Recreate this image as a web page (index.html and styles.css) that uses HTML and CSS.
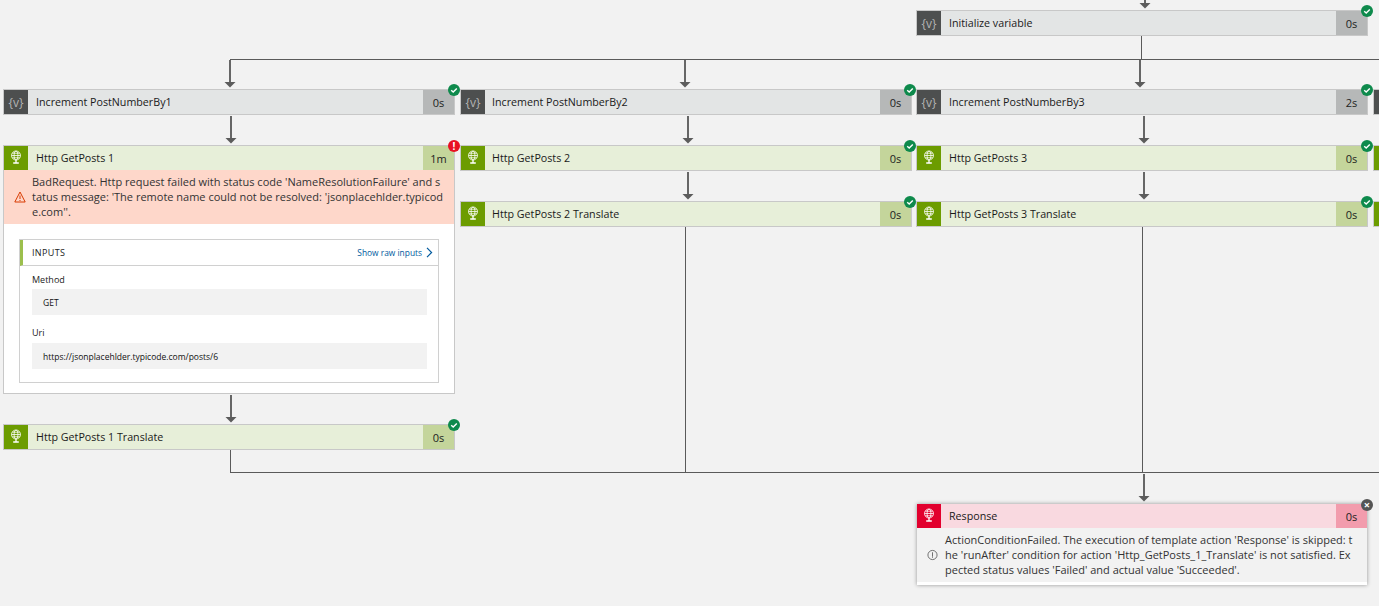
FILE: index.html
```html
<!DOCTYPE html>
<html lang="en">
<head>
  <meta charset="UTF-8">
  <title>Logic app run</title>
  <link rel="stylesheet" href="styles.css">
</head>
<body>
  <svg width="0" height="0" class="defs">
    <symbol id="globe" viewBox="0 0 24 24">
      <g fill="none" stroke="#fff" stroke-width="0.8">
        <circle cx="12" cy="9.5" r="4.5"/>
        <ellipse cx="12" cy="9.5" rx="2" ry="4.5"/>
        <path d="M7.5 9.5h9M8.2 7.2h7.6M8.2 11.8h7.6"/>
        <path d="M12 14v2.5M9.2 17h5.6" stroke-width="1.3"/>
      </g>
    </symbol>
    <symbol id="arrow" viewBox="0 0 12 28">
      <path d="M5 0h2v22H5z" fill="#666"/>
      <path d="M0.5 22h11L6 27.5z" fill="#5c5c5c"/>
    </symbol>
    <symbol id="ok" viewBox="0 0 12 12">
      <circle cx="6" cy="6" r="6" fill="#0e8a4c"/>
      <path d="M3.2 6.2l2 1.8 3.6-3.6" fill="none" stroke="#fff" stroke-width="1.4"/>
    </symbol>
  </svg>

  <div class="canvas">
    <!-- connectors -->
    <div class="line h top-bus"></div>
    <div class="line h bottom-bus"></div>
    <div class="line v from-init"></div>
    <div class="line v from-post1"></div>
    <div class="line v from-post2"></div>
    <div class="line v from-post3"></div>

    <svg class="arrow a-top"><use href="#arrow"/></svg>
    <svg class="arrow a-inc1"><use href="#arrow"/></svg>
    <svg class="arrow a-inc2"><use href="#arrow"/></svg>
    <svg class="arrow a-inc3"><use href="#arrow"/></svg>
    <svg class="arrow a-get1"><use href="#arrow"/></svg>
    <svg class="arrow a-get2"><use href="#arrow"/></svg>
    <svg class="arrow a-get3"><use href="#arrow"/></svg>
    <svg class="arrow a-tr2"><use href="#arrow"/></svg>
    <svg class="arrow a-tr3"><use href="#arrow"/></svg>
    <svg class="arrow a-tr1"><use href="#arrow"/></svg>
    <svg class="arrow a-resp"><use href="#arrow"/></svg>

    <!-- row: variables -->
    <div class="node var col3 row-init">
      <div class="head"><span class="ico">{v}</span><span class="name">Initialize variable</span><span class="time">0s</span></div>
      <svg class="badge"><use href="#ok"/></svg>
    </div>
    <div class="node var col1 row-inc">
      <div class="head"><span class="ico">{v}</span><span class="name">Increment PostNumberBy1</span><span class="time">0s</span></div>
      <svg class="badge"><use href="#ok"/></svg>
    </div>
    <div class="node var col2 row-inc">
      <div class="head"><span class="ico">{v}</span><span class="name">Increment PostNumberBy2</span><span class="time">0s</span></div>
      <svg class="badge"><use href="#ok"/></svg>
    </div>
    <div class="node var col3 row-inc">
      <div class="head"><span class="ico">{v}</span><span class="name">Increment PostNumberBy3</span><span class="time">2s</span></div>
      <svg class="badge"><use href="#ok"/></svg>
    </div>
    <div class="node var col4 row-inc">
      <div class="head"><span class="ico"></span></div>
    </div>

    <!-- row: get posts 1 (expanded) -->
    <div class="node http col1 row-get">
      <div class="head"><span class="ico"><svg class="globe"><use href="#globe"/></svg></span><span class="name">Http GetPosts 1</span><span class="time">1m</span></div>
      <div class="error">
        <svg class="warn" viewBox="0 0 12 12"><path d="M6 1L.8 11h10.4z" fill="none" stroke="#d83b01" stroke-width="1"/><path d="M5.5 4.5h1v3.6h-1zM5.5 9h1v1h-1z" fill="#d83b01"/></svg>
        <p>BadRequest. Http request failed with status code 'NameResolutionFailure' and status message: 'The remote name could not be resolved: 'jsonplacehlder.typicode.com''.</p>
      </div>
      <div class="details">
        <div class="inputs">
          <div class="inputs-head"><span class="inputs-title">INPUTS</span><a class="raw">Show raw inputs <svg class="chev" viewBox="0 0 7 11"><path d="M1 .8L5.6 5.5 1 10.2" fill="none" stroke="#005a9e" stroke-width="1.2"/></svg></a></div>
          <div class="inputs-body">
            <div class="field-label">Method</div>
            <div class="field">GET</div>
            <div class="field-label second">Uri</div>
            <div class="field">https://jsonplacehlder.typicode.com/posts/6</div>
          </div>
        </div>
      </div>
      <span class="badge fail">!</span>
    </div>

    <div class="node http col2 row-get">
      <div class="head"><span class="ico"><svg class="globe"><use href="#globe"/></svg></span><span class="name">Http GetPosts 2</span><span class="time">0s</span></div>
      <svg class="badge"><use href="#ok"/></svg>
    </div>
    <div class="node http col3 row-get">
      <div class="head"><span class="ico"><svg class="globe"><use href="#globe"/></svg></span><span class="name">Http GetPosts 3</span><span class="time">0s</span></div>
      <svg class="badge"><use href="#ok"/></svg>
    </div>
    <div class="node http col4 row-get">
      <div class="head"><span class="ico"></span></div>
    </div>

    <!-- row: translate -->
    <div class="node http col2 row-tr">
      <div class="head"><span class="ico"><svg class="globe"><use href="#globe"/></svg></span><span class="name">Http GetPosts 2 Translate</span><span class="time">0s</span></div>
      <svg class="badge"><use href="#ok"/></svg>
    </div>
    <div class="node http col3 row-tr">
      <div class="head"><span class="ico"><svg class="globe"><use href="#globe"/></svg></span><span class="name">Http GetPosts 3 Translate</span><span class="time">0s</span></div>
      <svg class="badge"><use href="#ok"/></svg>
    </div>
    <div class="node http col4 row-tr">
      <div class="head"><span class="ico"></span></div>
    </div>
    <div class="node http col1 row-tr1">
      <div class="head"><span class="ico"><svg class="globe"><use href="#globe"/></svg></span><span class="name">Http GetPosts 1 Translate</span><span class="time">0s</span></div>
      <svg class="badge"><use href="#ok"/></svg>
    </div>

    <!-- response -->
    <div class="node resp row-resp">
      <div class="head"><span class="ico"><svg class="globe"><use href="#globe"/></svg></span><span class="name">Response</span><span class="time">0s</span></div>
      <div class="skipped">
        <svg class="info" viewBox="0 0 12 12"><circle cx="6" cy="6" r="5" fill="none" stroke="#666"/><path d="M5.5 3h1v4.5h-1zM5.5 8h1v1h-1z" fill="#666"/></svg>
        <p>ActionConditionFailed. The execution of template action 'Response' is skipped: the 'runAfter' condition for action 'Http_GetPosts_1_Translate' is not satisfied. Expected status values 'Failed' and actual value 'Succeeded'.</p>
      </div>
      <span class="badge skip">&times;</span>
    </div>
  </div>
</body>
</html>
```

FILE: styles.css
```css
html, body {
  margin: 0;
  height: 100%;
  background: #f2f2f2;
  overflow: hidden;
}
.defs {
  position: absolute;
}
.canvas {
  position: relative;
  width: 1379px;
  height: 606px;
  overflow: hidden;
  font-family: "Open Sans", "Noto Sans", sans-serif;
  font-size: 11px;
  color: #222;
}

/* Connectors */
.line {
  position: absolute;
  background: #5a5a5a;
}
.line.h { height: 1px; }
.line.v { width: 1px; }
.top-bus { left: 230px; top: 59px; width: 1149px; }
.bottom-bus { left: 230px; top: 472px; width: 1149px; }
.from-init { left: 1141px; top: 36px; height: 23px; }
.from-post1 { left: 230px; top: 450px; height: 22px; }
.from-post2 { left: 685px; top: 227px; height: 245px; }
.from-post3 { left: 1142px; top: 227px; height: 245px; }

.arrow {
  position: absolute;
  width: 12px;
  height: 28px;
}
.a-top { left: 1139px; top: -19px; }
.a-inc1 { left: 224px; top: 60px; }
.a-inc2 { left: 679px; top: 60px; }
.a-inc3 { left: 1134px; top: 60px; }
.a-get1 { left: 225px; top: 116px; }
.a-get2 { left: 682px; top: 116px; }
.a-get3 { left: 1138px; top: 116px; }
.a-tr2 { left: 682px; top: 172px; }
.a-tr3 { left: 1138px; top: 172px; }
.a-tr1 { left: 225px; top: 395px; }
.a-resp { left: 1138px; top: 474px; }

/* Nodes */
.node {
  position: absolute;
  width: 450px;
  border: 1px solid #c8c8c8;
  background: #fff;
}
.col1 { left: 3px; }
.col2 { left: 460px; }
.col3 { left: 916px; }
.col4 { left: 1373px; }
.row-init { top: 10px; }
.row-inc { top: 89px; }
.row-get { top: 145px; }
.row-tr { top: 201px; }
.row-tr1 { top: 424px; }
.row-resp {
  left: 917px;
  top: 504px;
  border: 0;
  box-shadow: 0 0 4px rgba(0,0,0,.4);
}

.head {
  display: flex;
  align-items: center;
  height: 24px;
}
.ico {
  flex: none;
  display: flex;
  align-items: center;
  justify-content: center;
  width: 24px;
  height: 24px;
  color: #b4b4b4;
  font-size: 12px;
}
.globe { width: 24px; height: 24px; }
.name {
  flex: 1;
  padding: 0 0 1px 8px;
  font-size: 10.7px;
  color: #1a1a1a;
}
.col2 .name { padding-left: 7px; }
.time {
  flex: none;
  width: 31px;
  line-height: 24px;
  padding-top: 1px;
  height: 23px;
  text-align: center;
}

.var .head { background: #e3e5e5; }
.var .ico { background: #4d4f4f; }
.var .time { background: #b6b8b8; }
.http .head { background: #e7efd9; }
.http .ico { background: #6c9c00; }
.http .time { background: #c4d59b; }
.resp .head { background: #f9d9e0; }
.resp .ico { background: #e2002e; }
.resp .time { background: #f29cad; }

.badge {
  position: absolute;
  right: -6px;
  top: -6px;
  width: 12px;
  height: 12px;
}
.col2 .badge { right: -5px; }
.fail, .skip {
  display: block;
  border-radius: 50%;
  color: #fff;
  font-weight: 700;
  line-height: 12px;
  text-align: center;
}
.fail { background: #e81123; font-size: 10px; }
.skip { background: #555; font-size: 11px; top: -5px; }

/* Error panel */
.error {
  display: flex;
  align-items: center;
  height: 54px;
  background: #fed7ca;
  padding-left: 10px;
  box-sizing: border-box;
}
.warn {
  flex: none;
  width: 12px;
  height: 12px;
  margin-right: 6px;
}
.error p, .skipped p {
  margin: 0;
  width: 412px;
  line-height: 15px;
  word-break: break-all;
  color: #333;
}
.error p { padding-bottom: 2px; }
.details {
  padding: 15px 15px 10px;
  height: 144px;
}
.inputs {
  border: 1px solid #d0d0d0;
  height: 142px;
}
.inputs-head {
  display: flex;
  justify-content: space-between;
  align-items: center;
  height: 25px;
  padding: 0 5px 0 9px;
  border-left: 3px solid #9cbf4d;
  border-bottom: 1px solid #d0d0d0;
  font-size: 9px;
  color: #222;
}
.inputs-title { letter-spacing: .35px; }
.raw {
  display: flex;
  align-items: center;
  gap: 4px;
  font-size: 8.4px;
  color: #005a9e;
}
.chev { width: 7px; height: 11px; }
.inputs-body {
  padding: 6px 11px 0 12px;
}
.field-label {
  font-size: 9px;
  line-height: 15px;
  margin-bottom: 2px;
}
.field-label.second { margin: 10px 0 3px; }
.field {
  background: #f2f2f2;
  height: 26px;
  line-height: 27px;
  padding-left: 11px;
  font-size: 8.5px;
  color: #111;
}

/* Skipped panel */
.skipped {
  display: flex;
  align-items: center;
  height: 54px;
  background: #f2f2f2;
  border-bottom: 3px solid #fff;
  padding-left: 10px;
}
.skipped p { padding-bottom: 2px; }
.info {
  flex: none;
  width: 11px;
  height: 12px;
  margin-right: 7px;
}
```
